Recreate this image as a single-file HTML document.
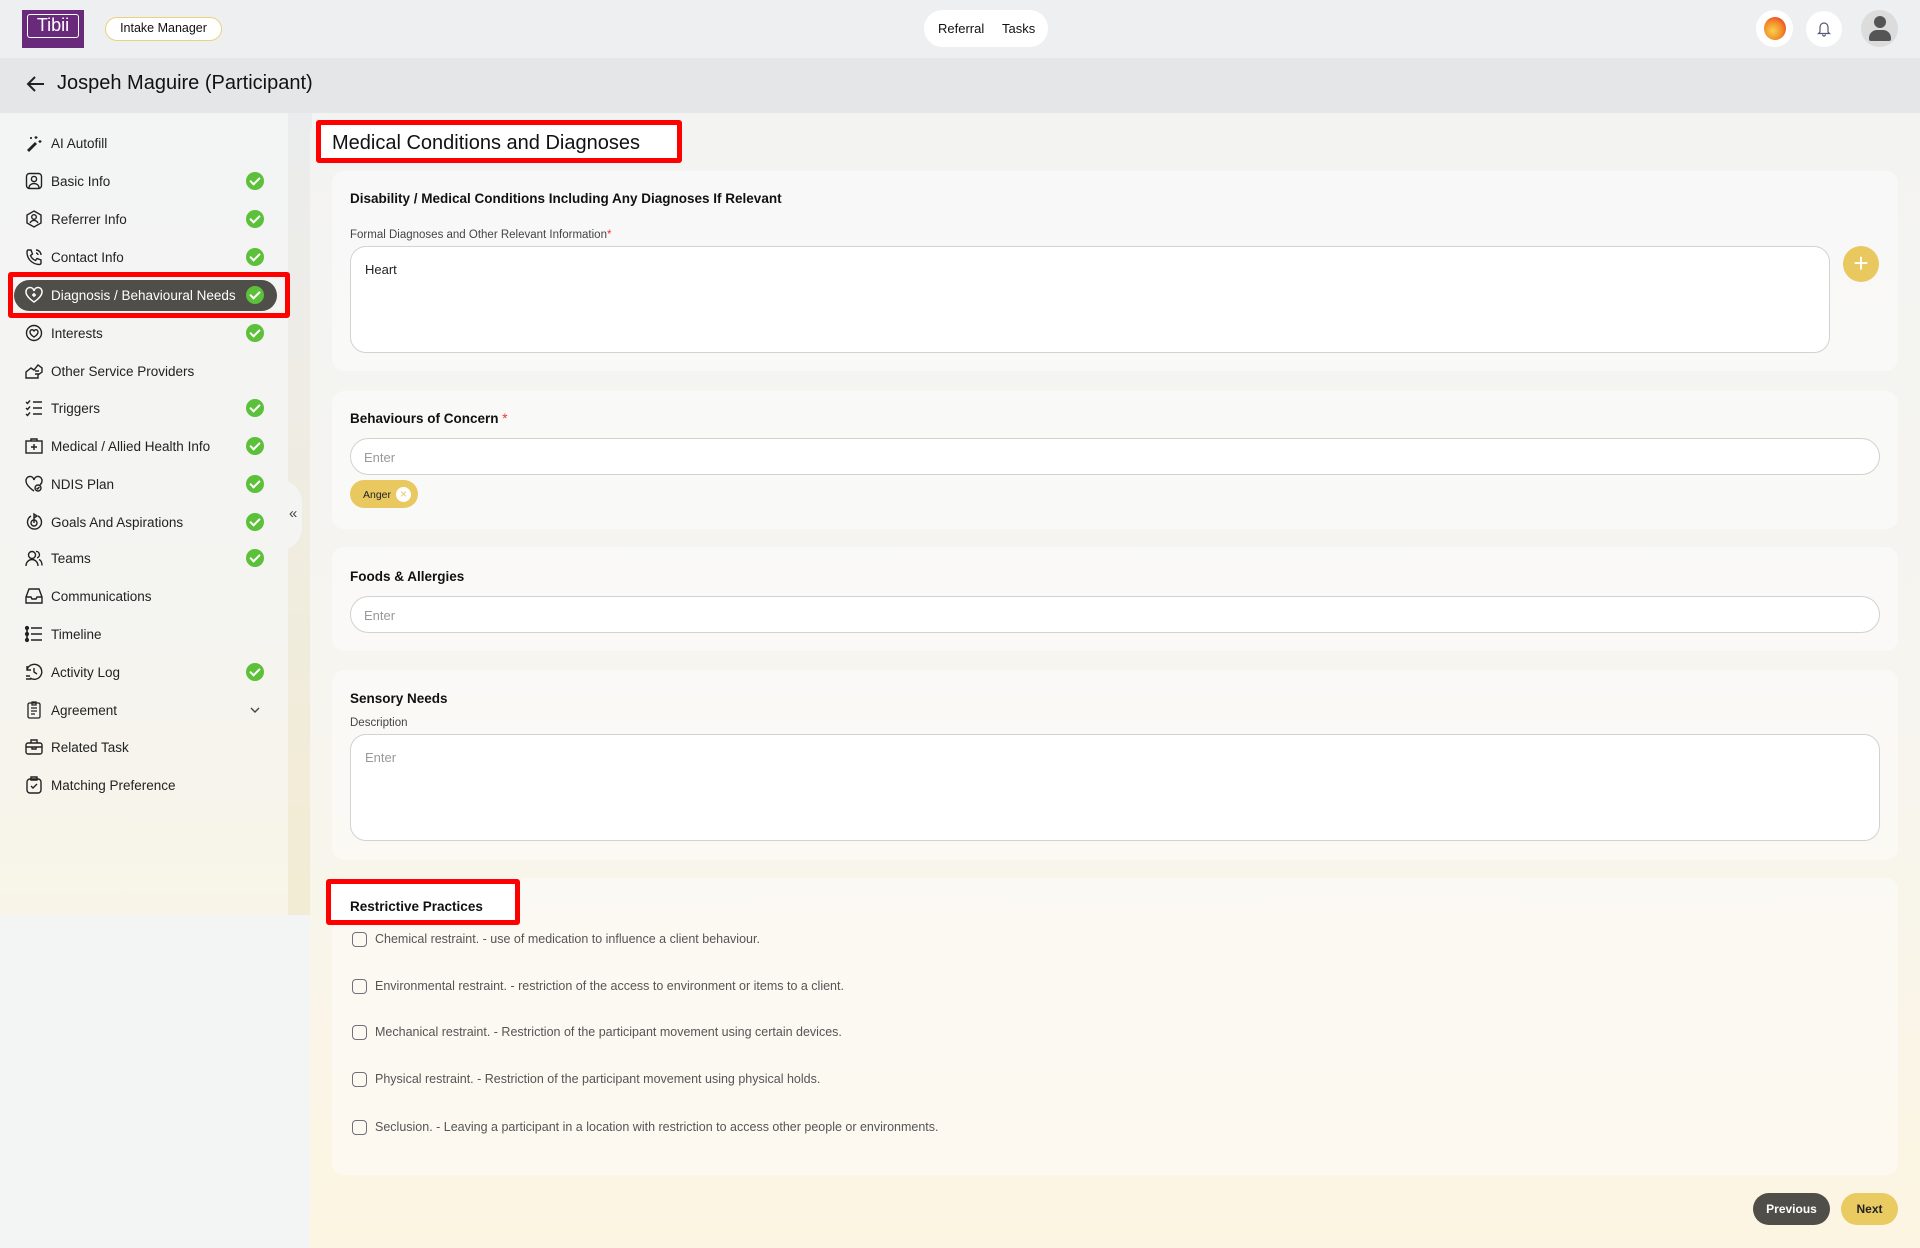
<!DOCTYPE html>
<html><head><meta charset="utf-8"><style>
*{box-sizing:border-box;margin:0;padding:0}
body{width:1920px;height:1248px;overflow:hidden;font-family:"Liberation Sans",Arial,sans-serif;background:#f3f4f4;position:relative;color:#111}
.abs{position:absolute}
.top{left:0;top:0;width:1920px;height:58px;background:#eeeff1}
.hdr{left:0;top:58px;width:1920px;height:55px;background:#e5e6e8}
.gut{left:288px;top:113px;width:24px;height:802px;background:linear-gradient(#ebeced,#f3ecd4)}
.side{left:0;top:113px;width:288px;height:802px;background:linear-gradient(#f3f4f4 0%,#f4f4f1 60%,#f8f5e8 100%);border-top-right-radius:22px}
.main{left:310px;top:113px;width:1610px;height:1135px;background:linear-gradient(#f3f3f2 0%,#f6f5f0 50%,#fcf5e2 100%);border-top-left-radius:22px}
.item{position:absolute;left:24px;height:30px;display:flex;align-items:center;font-size:13.5px;color:#222}
.item svg{width:20px;height:20px;margin-right:7px;flex:none}
.chk{position:absolute;left:246px;width:18px;height:18px;border-radius:50%;background:#5cc03a}
.chk:after{content:"";position:absolute;left:6px;top:3px;width:4px;height:8px;border:solid #fff;border-width:0 2px 2px 0;transform:rotate(45deg)}
.card{position:absolute;left:332px;width:1566px;background:rgba(255,255,255,.45);border-radius:12px}
.h{position:absolute;font-size:13.5px;font-weight:bold;color:#111}
.lbl{position:absolute;font-size:11.5px;color:#444}
.inp{position:absolute;left:350px;width:1530px;height:37px;background:#fff;border:1px solid #d2d2d2;border-radius:19px;font-size:13px;color:#999;padding:11px 13px}
.ta{position:absolute;left:350px;background:#fff;border:1px solid #d2d2d2;border-radius:16px;font-size:13px;padding:15px 14px}
.red{position:absolute;border:5px solid #f00;border-radius:3px;background:#fff}
.cb{position:absolute;left:352px;width:15px;height:15px;border:1.6px solid #70717a;border-radius:4px}
.ct{position:absolute;left:375px;font-size:12.5px;color:#555}
</style></head><body>
<div class="abs top"></div>
<div class="abs" style="left:22px;top:10px;width:62px;height:38px;background:#6a2a7c"><div style="position:absolute;left:5px;top:4px;width:52px;height:24px;border:1.5px solid #fff;border-radius:3px;color:#fff;font-size:18px;text-align:center;line-height:21px">Tibii</div></div>
<div class="abs" style="left:105px;top:17px;width:117px;height:24px;border:1.5px solid #ead27a;border-radius:12px;background:#fff;font-size:12.5px;text-align:center;line-height:21px">Intake Manager</div>
<div class="abs" style="left:924px;top:10px;width:124px;height:37px;background:#fff;border-radius:19px;font-size:13px;line-height:37px"><span style="position:absolute;left:14px">Referral</span><span style="position:absolute;left:78px">Tasks</span></div>
<div class="abs" style="left:1756px;top:10px;width:37px;height:37px;border-radius:50%;background:#fff"><div style="position:absolute;left:8px;top:7px;width:22px;height:23px;border-radius:50%;background:radial-gradient(circle at 40% 60%,#f8d14a,#f28a2a 50%,#e9442a 80%)"></div></div>
<div class="abs" style="left:1806px;top:11px;width:36px;height:36px;border-radius:50%;background:#fff"><svg style="position:absolute;left:11px;top:10px" width="14" height="16" viewBox="0 0 14 16"><path d="M3 11V6a4 4 0 0 1 8 0v5l1.5 1.5h-11z M5.5 13.5a1.5 1.5 0 0 0 3 0" fill="none" stroke="#555a6e" stroke-width="1.2"/></svg></div>
<div class="abs" style="left:1861px;top:10px;width:37px;height:37px;border-radius:50%;background:#dcdcdc"><div style="position:absolute;left:13px;top:6px;width:12px;height:12px;border-radius:50%;background:#555"></div><div style="position:absolute;left:8px;top:20px;width:22px;height:11px;border-radius:8px 8px 2px 2px;background:#555"></div></div>
<div class="abs hdr"></div>
<svg class="abs" style="left:26px;top:75px" width="20" height="18" viewBox="0 0 20 18"><path d="M18 9H3M9 2L2 9l7 7" fill="none" stroke="#222" stroke-width="2"/></svg>
<div class="abs" style="left:57px;top:72px;font-size:20px;color:#111">Jospeh Maguire (Participant)</div>
<div class="abs gut"></div>
<div class="abs side"></div>
<div class="abs" style="left:280px;top:480px;width:22px;height:70px;background:#f4f4f2;border-radius:0 30px 30px 0"></div>
<div class="abs" style="left:289px;top:505px;font-size:15px;color:#444">«</div>
<div class="abs main"></div>

<div class="red" style="left:8px;top:272px;width:282px;height:46px;background:none"></div>
<div class="abs" style="left:14px;top:280px;width:263px;height:31px;background:#4f4e49;border-radius:16px"></div>

<div class="item" style="top:128px"><svg viewBox="0 0 20 20"><path d="M3 17l8-8 2 2-8 8z" fill="#222"/><path d="M12 3v3M10.5 4.5h3M16 7v3M14.5 8.5h3M7 4v2M6 5h2" stroke="#222" stroke-width="1.2"/></svg>AI Autofill</div>
<div class="item" style="top:166px"><svg viewBox="0 0 20 20" fill="none" stroke="#222" stroke-width="1.4"><rect x="2.5" y="2.5" width="15" height="15" rx="3"/><circle cx="10" cy="8" r="2.6"/><path d="M5 17c0-3 2.5-4.5 5-4.5s5 1.5 5 4.5"/></svg>Basic Info</div><div class="chk" style="top:172px"></div>
<div class="item" style="top:204px"><svg viewBox="0 0 20 20" fill="none" stroke="#222" stroke-width="1.4"><path d="M10 2l7 4v8l-7 4-7-4V6z"/><circle cx="10" cy="8" r="2.3"/><path d="M6 14c1-2 2.5-2.6 4-2.6s3 .6 4 2.6"/></svg>Referrer Info</div><div class="chk" style="top:210px"></div>
<div class="item" style="top:242px"><svg viewBox="0 0 20 20" fill="none" stroke="#222" stroke-width="1.4"><path d="M4 3l3 0 1.5 4-2 1.5a9 9 0 0 0 5 5l1.5-2 4 1.5v3c0 1-1 1.5-2 1.5C8 17 3 12 3 5c0-1 .5-2 1-2z"/><path d="M12 3a5 5 0 0 1 5 5M12 6a2 2 0 0 1 2 2"/></svg>Contact Info</div><div class="chk" style="top:248px"></div>
<div class="item" style="top:280px;color:#fff"><svg viewBox="0 0 20 20" fill="none" stroke="#fff" stroke-width="1.5"><path d="M10 17S2 12 2 7a4 4 0 0 1 8-1 4 4 0 0 1 8 1c0 5-8 10-8 10z"/><path d="M10 8v4M8 10h4"/></svg>Diagnosis / Behavioural Needs</div><div class="chk" style="top:286px"></div>
<div class="item" style="top:318px"><svg viewBox="0 0 20 20" fill="none" stroke="#222" stroke-width="1.4"><circle cx="10" cy="10" r="7.5"/><path d="M10 14s-4-2.5-4-5a2 2 0 0 1 4-.5 2 2 0 0 1 4 .5c0 2.5-4 5-4 5z"/></svg>Interests</div><div class="chk" style="top:324px"></div>
<div class="item" style="top:356px"><svg viewBox="0 0 20 20" fill="none" stroke="#222" stroke-width="1.4"><path d="M2 17V11l5-4 3 2 4-5 4 3v4l-4 3v3zM11 10h4M11 13h4"/></svg>Other Service Providers</div>
<div class="item" style="top:393px"><svg viewBox="0 0 20 20" fill="none" stroke="#222" stroke-width="1.4"><path d="M9 4h9M9 10h9M9 16h9M2 4l1.5 1.5L6 2.5M2 10l1.5 1.5L6 8.5M2 16l1.5 1.5L6 14.5"/></svg>Triggers</div><div class="chk" style="top:399px"></div>
<div class="item" style="top:431px"><svg viewBox="0 0 20 20" fill="none" stroke="#222" stroke-width="1.4"><rect x="2" y="5" width="16" height="12"/><path d="M7 5V3h6v2M10 8v6M7 11h6"/></svg>Medical / Allied Health Info</div><div class="chk" style="top:437px"></div>
<div class="item" style="top:469px"><svg viewBox="0 0 20 20" fill="none" stroke="#222" stroke-width="1.4"><path d="M10 17S2 12 2 7a4 4 0 0 1 8-1 4 4 0 0 1 8 1c0 2-1 3-2 4"/><circle cx="14" cy="14" r="3"/><path d="M12.6 14l1 1 1.8-2"/></svg>NDIS Plan</div><div class="chk" style="top:475px"></div>
<div class="item" style="top:507px"><svg viewBox="0 0 20 20" fill="none" stroke="#222" stroke-width="1.4"><path d="M7 4a7 7 0 1 0 7 0"/><circle cx="10" cy="11" r="3"/><path d="M10 11V2l3 2-3 2"/></svg>Goals And Aspirations</div><div class="chk" style="top:513px"></div>
<div class="item" style="top:543px"><svg viewBox="0 0 20 20" fill="none" stroke="#222" stroke-width="1.4"><circle cx="8" cy="7" r="3.5"/><path d="M2 18c0-4 3-6.5 6-6.5s6 2.5 6 6.5M12 3.5a3.2 3.2 0 0 1 1 6.3M15 11.5c2 .8 3 3 3 6"/></svg>Teams</div><div class="chk" style="top:549px"></div>
<div class="item" style="top:581px"><svg viewBox="0 0 20 20" fill="none" stroke="#222" stroke-width="1.4"><path d="M2 11l3-8h10l3 8v6H2zM2 11h5l1 2h4l1-2h5"/></svg>Communications</div>
<div class="item" style="top:619px"><svg viewBox="0 0 20 20" fill="none" stroke="#222" stroke-width="1.6"><path d="M3 2v16M7 4h11M7 10h11M7 16h11"/><circle cx="3" cy="4" r="1.3" fill="#222"/><circle cx="3" cy="10" r="1.3" fill="#222"/><circle cx="3" cy="16" r="1.3" fill="#222"/></svg>Timeline</div>
<div class="item" style="top:657px"><svg viewBox="0 0 20 20" fill="none" stroke="#222" stroke-width="1.4"><path d="M3 8a7.5 7.5 0 1 1 3 8M10 6v4l3 2M2 14h4M2 17h5M3 4v4h4"/></svg>Activity Log</div><div class="chk" style="top:663px"></div>
<div class="item" style="top:695px"><svg viewBox="0 0 20 20" fill="none" stroke="#222" stroke-width="1.3"><rect x="4" y="3" width="12" height="15" rx="1.5"/><path d="M8 2h4v3H8zM7 8h6M7 11h6M7 14h4"/></svg>Agreement</div>
<svg class="abs" style="left:250px;top:706px" width="10" height="8" viewBox="0 0 10 8"><path d="M1 2l4 4 4-4" fill="none" stroke="#444" stroke-width="1.4"/></svg>
<div class="item" style="top:732px"><svg viewBox="0 0 20 20" fill="none" stroke="#222" stroke-width="1.4"><rect x="2" y="6" width="16" height="11" rx="2"/><path d="M7 6V3h6v3M2 10h16M8 10v2h4v-2"/></svg>Related Task</div>
<div class="item" style="top:770px"><svg viewBox="0 0 20 20" fill="none" stroke="#222" stroke-width="1.4"><rect x="3" y="4" width="14" height="14" rx="3"/><path d="M7 2h6v3H7zM7 11l2 2 4-4"/></svg>Matching Preference</div>

<div class="red" style="left:316px;top:120px;width:366px;height:43px"></div>
<div class="abs" style="left:332px;top:132px;font-size:20px;color:#111">Medical Conditions and Diagnoses</div>

<div class="card" style="top:171px;height:200px"></div>
<div class="h" style="left:350px;top:191px">Disability / Medical Conditions Including Any Diagnoses If Relevant</div>
<div class="lbl" style="left:350px;top:229px">Formal Diagnoses and Other Relevant Information<span style="color:#e33">*</span></div>
<div class="ta" style="top:246px;width:1480px;height:107px;color:#222">Heart</div>
<div class="abs" style="left:1843px;top:246px;width:36px;height:36px;border-radius:50%;background:#e9c85f;color:#fff;font-size:26px;line-height:34px;text-align:center">+</div>

<div class="card" style="top:391px;height:138px"></div>
<div class="h" style="left:350px;top:411px">Behaviours of Concern <span style="color:#e33;font-weight:normal">*</span></div>
<div class="inp" style="top:438px">Enter</div>
<div class="abs" style="left:350px;top:480px;width:68px;height:28px;border-radius:14px;background:#e9c85f;font-size:10.5px;color:#222;padding:9px 0 0 13px">Anger<span style="position:absolute;left:46px;top:7px;width:15px;height:15px;border-radius:50%;background:#fff;color:#e9c85f;font-size:12px;line-height:14px;text-align:center">×</span></div>

<div class="card" style="top:547px;height:104px"></div>
<div class="h" style="left:350px;top:569px">Foods &amp; Allergies</div>
<div class="inp" style="top:596px">Enter</div>

<div class="card" style="top:670px;height:190px"></div>
<div class="h" style="left:350px;top:691px">Sensory Needs</div>
<div class="lbl" style="left:350px;top:717px">Description</div>
<div class="ta" style="top:734px;width:1530px;height:107px;color:#999">Enter</div>

<div class="card" style="top:878px;height:297px"></div>
<div class="red" style="left:326px;top:879px;width:194px;height:46px"></div>
<div class="h" style="left:350px;top:899px">Restrictive Practices</div>
<div class="cb" style="top:932px"></div><div class="ct" style="top:932px">Chemical restraint. - use of medication to influence a client behaviour.</div>
<div class="cb" style="top:979px"></div><div class="ct" style="top:979px">Environmental restraint. - restriction of the access to environment or items to a client.</div>
<div class="cb" style="top:1025px"></div><div class="ct" style="top:1025px">Mechanical restraint. - Restriction of the participant movement using certain devices.</div>
<div class="cb" style="top:1072px"></div><div class="ct" style="top:1072px">Physical restraint. - Restriction of the participant movement using physical holds.</div>
<div class="cb" style="top:1120px"></div><div class="ct" style="top:1120px">Seclusion. - Leaving a participant in a location with restriction to access other people or environments.</div>

<div class="abs" style="left:1753px;top:1193px;width:77px;height:32px;border-radius:16px;background:#4f4e49;color:#fff;font-size:12px;font-weight:bold;text-align:center;line-height:32px">Previous</div>
<div class="abs" style="left:1841px;top:1193px;width:57px;height:32px;border-radius:16px;background:#eacb62;color:#222;font-size:12px;font-weight:bold;text-align:center;line-height:32px">Next</div>
</body></html>
